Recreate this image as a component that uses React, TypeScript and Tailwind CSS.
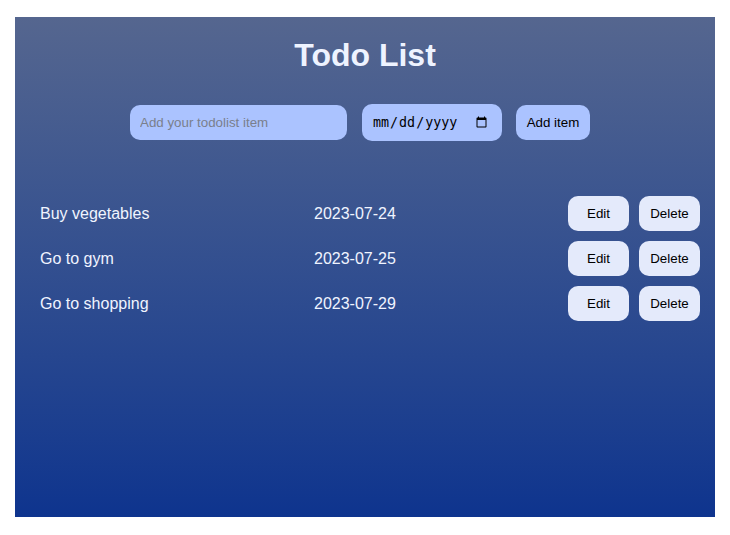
import React from "react";

const items = [
  { text: "Buy vegetables", date: "2023-07-24" },
  { text: "Go to gym", date: "2023-07-25" },
  { text: "Go to shopping", date: "2023-07-29" },
];

export default function App() {
  return (
    <div className="w-[730px] h-[535px] bg-white pt-[17px] pl-[15px] font-['Liberation_Sans',Arial,sans-serif]">
      <div className="w-[700px] h-[500px] bg-gradient-to-b from-[#55668f] to-[#0e348e] flex flex-col">
        <h1 className="text-center text-[32px] leading-[37px] font-bold text-[#eef3ff] mt-[20px]">Todo List</h1>
        <div className="flex items-center justify-center mt-[30px] ml-[-10px]">
          <input
            type="text"
            placeholder="Add your todolist item"
            className="w-[217px] h-[35px] rounded-[10px] bg-[#abc3ff] pl-[10px] text-[13.33px] text-black placeholder:text-[#7a7f8c] outline-none"
          />
          <input
            type="date"
            className="ml-[15px] w-[140px] h-[37px] rounded-[10px] bg-[#abc3ff] pl-[10px] pr-[12px] text-[13.33px] text-black font-['DejaVu_Sans_Mono',monospace] outline-none"
          />
          <button className="ml-[14px] w-[74px] h-[35px] rounded-[10px] bg-[#abc3ff] text-[13.33px] text-black">
            Add item
          </button>
        </div>
        <div className="mt-[55px] flex flex-col gap-[10px] pl-[25px] pr-[15px]">
          {items.map((it) => (
            <div key={it.text} className="flex items-center h-[35px]">
              <span className="w-[274px] text-[16px] text-[#f0f4ff]">{it.text}</span>
              <span className="text-[16px] text-[#f0f4ff]">{it.date}</span>
              <div className="ml-auto flex gap-[10px]">
                <button className="w-[61px] h-[35px] rounded-[10px] bg-[#e4eafb] text-[13.33px] text-black">Edit</button>
                <button className="w-[61px] h-[35px] rounded-[10px] bg-[#e4eafb] text-[13.33px] text-black">Delete</button>
              </div>
            </div>
          ))}
        </div>
      </div>
    </div>
  );
}
